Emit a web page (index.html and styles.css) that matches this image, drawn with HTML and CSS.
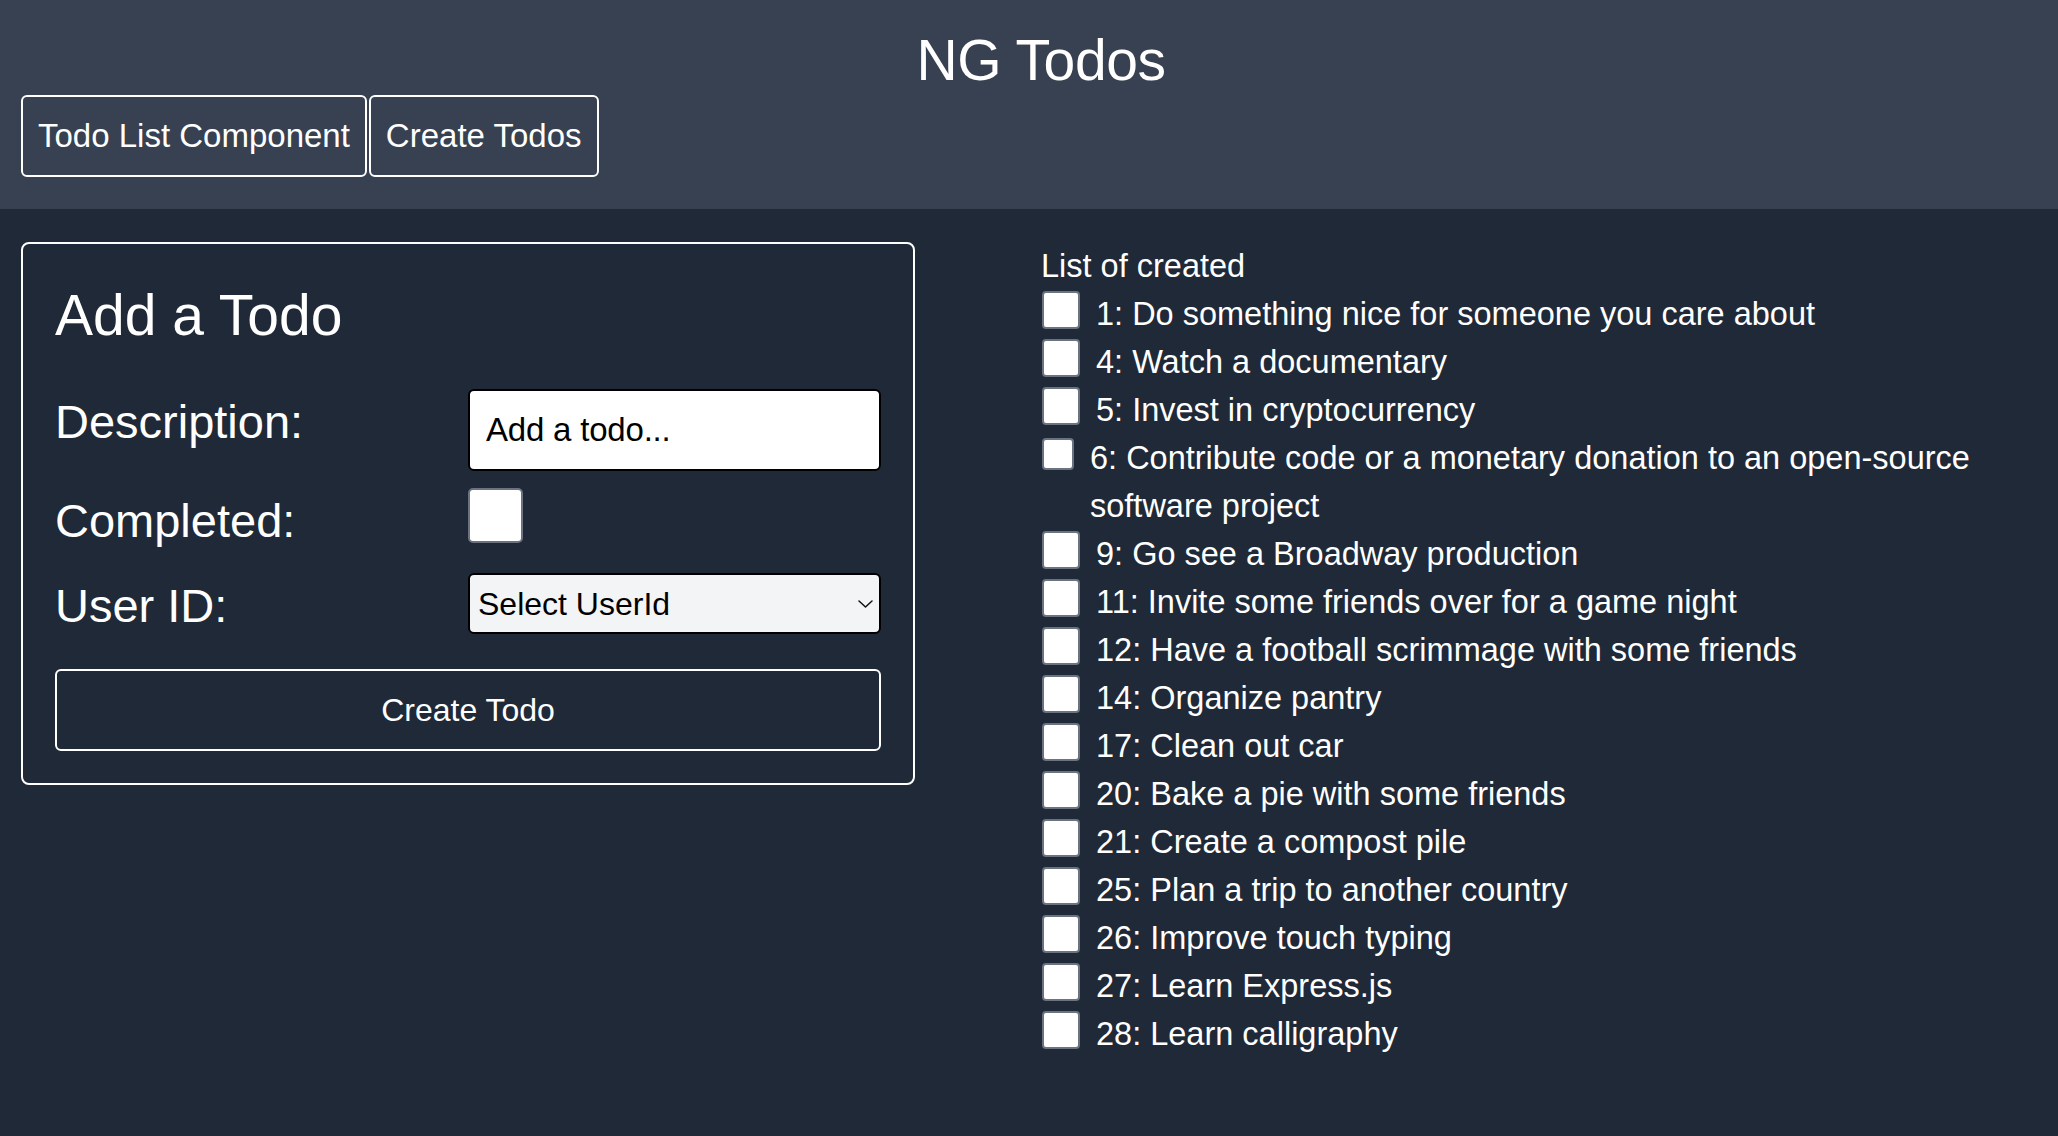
FILE: index.html
```html
<!DOCTYPE html>
<html lang="en">
<head>
<meta charset="utf-8">
<title>NG Todos</title>
<link rel="stylesheet" href="styles.css">
</head>
<body>
<header class="topbar">
  <h1 class="app-title">NG Todos</h1>
  <nav class="nav">
    <button class="nav-btn">Todo List Component</button>
    <button class="nav-btn">Create Todos</button>
  </nav>
</header>
<main class="content">
  <section class="card">
    <h2 class="card-title">Add a Todo</h2>
    <div class="form-row row-desc">
      <label class="form-label">Description:</label>
      <input class="text-input" type="text" placeholder="Add a todo...">
    </div>
    <div class="form-row row-completed">
      <label class="form-label">Completed:</label>
      <div><input class="big-check" type="checkbox"></div>
    </div>
    <div class="form-row row-user">
      <label class="form-label">User ID:</label>
      <div class="select-wrap">
        <select class="user-select"><option>Select UserId</option></select>
        <svg class="chevron" width="15" height="8" viewBox="0 0 15 8"><path d="M1 1 L7.5 7 L14 1" fill="none" stroke="#111" stroke-width="1.5" stroke-linecap="round" stroke-linejoin="round"/></svg>
      </div>
    </div>
    <button class="submit-btn">Create Todo</button>
  </section>
  <section class="todo-list">
    <div class="list-title">List of created</div>
    <ul class="items">
      <li class="item"><input class="item-check" type="checkbox"><span class="item-text">1: Do something nice for someone you care about</span></li>
      <li class="item"><input class="item-check" type="checkbox"><span class="item-text">4: Watch a documentary</span></li>
      <li class="item"><input class="item-check" type="checkbox"><span class="item-text">5: Invest in cryptocurrency</span></li>
      <li class="item"><input class="item-check small" type="checkbox"><span class="item-text">6: Contribute code or a monetary donation to an open-source software project</span></li>
      <li class="item"><input class="item-check" type="checkbox"><span class="item-text">9: Go see a Broadway production</span></li>
      <li class="item"><input class="item-check" type="checkbox"><span class="item-text">11: Invite some friends over for a game night</span></li>
      <li class="item"><input class="item-check" type="checkbox"><span class="item-text">12: Have a football scrimmage with some friends</span></li>
      <li class="item"><input class="item-check" type="checkbox"><span class="item-text">14: Organize pantry</span></li>
      <li class="item"><input class="item-check" type="checkbox"><span class="item-text">17: Clean out car</span></li>
      <li class="item"><input class="item-check" type="checkbox"><span class="item-text">20: Bake a pie with some friends</span></li>
      <li class="item"><input class="item-check" type="checkbox"><span class="item-text">21: Create a compost pile</span></li>
      <li class="item"><input class="item-check" type="checkbox"><span class="item-text">25: Plan a trip to another country</span></li>
      <li class="item"><input class="item-check" type="checkbox"><span class="item-text">26: Improve touch typing</span></li>
      <li class="item"><input class="item-check" type="checkbox"><span class="item-text">27: Learn Express.js</span></li>
      <li class="item"><input class="item-check" type="checkbox"><span class="item-text">28: Learn calligraphy</span></li>
    </ul>
  </section>
</main>
</body>
</html>
```
FILE: styles.css
```css
* { box-sizing: border-box; }

html, body {
  margin: 0;
  background: #1f2937;
}

body {
  font-family: "Liberation Sans", Arial, sans-serif;
  color: #ffffff;
  min-height: 100vh;
}

.topbar {
  background: #374151;
  padding: 26px 21px 32px;
}

.app-title {
  margin: 0;
  text-align: center;
  font-size: 57px;
  font-weight: 400;
  line-height: 68px;
  letter-spacing: -0.4px;
  padding-left: 24px;
}

.nav {
  display: flex;
  gap: 2px;
  margin-top: 1px;
}

.nav-btn {
  font-family: "Liberation Sans", Arial, sans-serif;
  font-size: 33px;
  line-height: 48px;
  color: #ffffff;
  background: transparent;
  border: 2px solid #ffffff;
  border-radius: 6px;
  padding: 15px 15px;
  height: 82px;
}

.content {
  display: flex;
  align-items: flex-start;
  gap: 126px;
  padding: 33px 21px 0;
}

.card {
  width: 894px;
  flex: none;
  border: 2px solid #ffffff;
  border-radius: 8px;
  padding: 39px 32px 32px;
}

.card-title {
  margin: 0 0 42px;
  font-size: 57px;
  font-weight: 400;
  line-height: 64px;
}

.form-row {
  display: grid;
  grid-template-columns: 1fr 1fr;
  align-items: start;
}

.row-desc { margin-bottom: 17px; }
.row-completed { margin-bottom: 29px; }
.row-user { margin-bottom: 35px; }

.form-label {
  font-size: 47px;
  line-height: 47px;
  padding-top: 9px;
}

.text-input {
  display: block;
  width: 100%;
  height: 82px;
  border: 2px solid #000000;
  border-radius: 6px;
  background: #ffffff;
  padding: 0 16px;
  font-family: "Liberation Sans", Arial, sans-serif;
  font-size: 33px;
  letter-spacing: -0.2px;
  color: #000000;
  outline: none;
}

.text-input::placeholder {
  color: #000000;
  opacity: 1;
}

.big-check {
  appearance: none;
  display: block;
  width: 55px;
  height: 55px;
  margin: 0;
  background: #ffffff;
  border: 2px solid #6b7280;
  border-radius: 5px;
}

.select-wrap {
  position: relative;
}

.user-select {
  appearance: none;
  display: block;
  width: 100%;
  height: 61px;
  background: #f3f4f6;
  border: 2px solid #000000;
  border-radius: 6px;
  padding: 0 40px 0 8px;
  font-family: "Liberation Sans", Arial, sans-serif;
  font-size: 32px;
  color: #000000;
}

.chevron {
  position: absolute;
  right: 8px;
  top: 27px;
}

.submit-btn {
  display: block;
  width: 100%;
  height: 82px;
  border: 2px solid #ffffff;
  border-radius: 6px;
  background: transparent;
  color: #ffffff;
  font-family: "Liberation Sans", Arial, sans-serif;
  font-size: 32px;
}

.todo-list {
  flex: 1;
  font-size: 32.5px;
  line-height: 48px;
}

.items {
  list-style: none;
  margin: 0;
  padding: 0;
}

.item {
  display: flex;
  align-items: flex-start;
  gap: 16px;
}

.item-check {
  appearance: none;
  flex: none;
  width: 38px;
  height: 38px;
  margin: 1px 0 0 1px;
  background: #ffffff;
  border: 2px solid #6b7280;
  border-radius: 4px;
}

.item-check.small {
  width: 32px;
  height: 32px;
  margin-top: 4px;
}
```
